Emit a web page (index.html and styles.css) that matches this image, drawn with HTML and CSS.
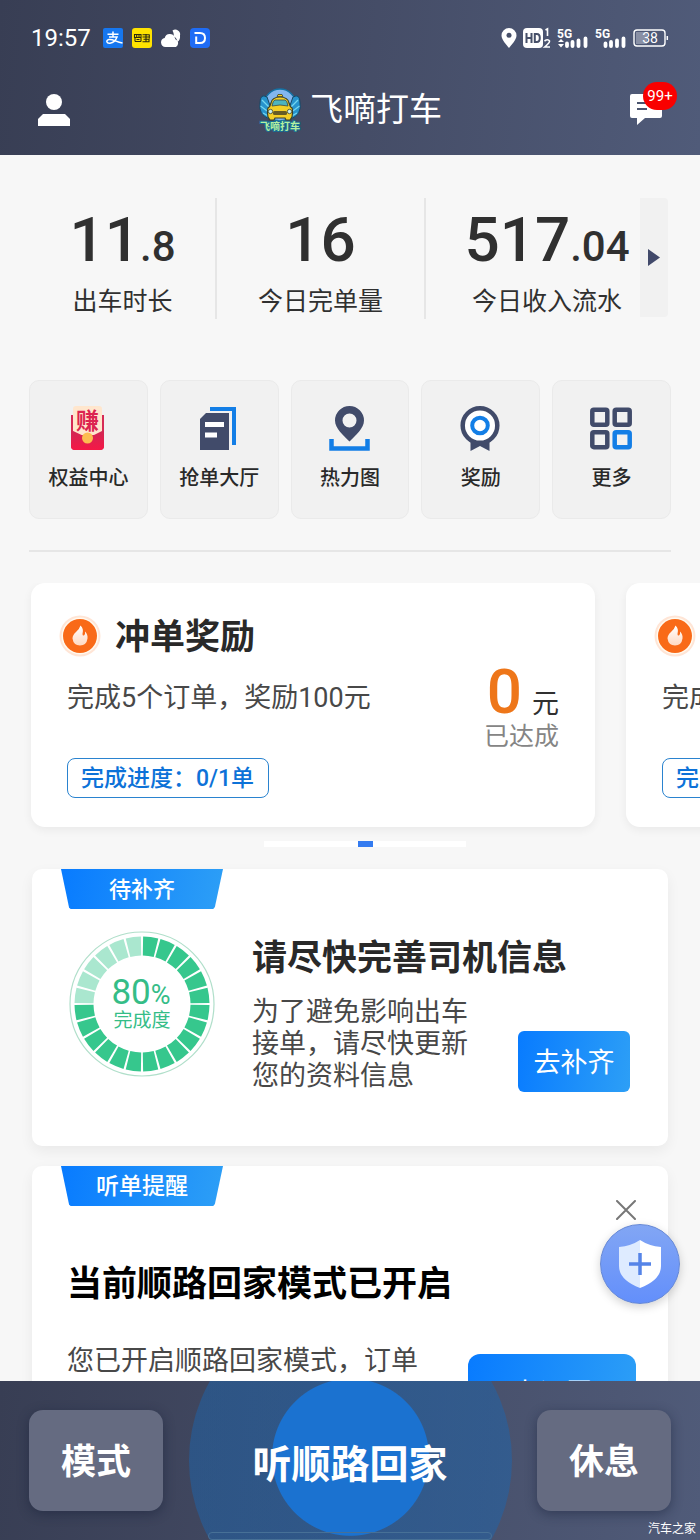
FILE: index.html
```html
<!DOCTYPE html>
<html lang="zh-CN">
<head>
<meta charset="utf-8">
<meta name="viewport" content="width=device-width, initial-scale=1">
<title>飞嘀打车</title>
<link rel="stylesheet" href="styles.css">
</head>
<body>
<div class="app">
  <header class="header">
    <div class="status">
      <div class="status-side">
        <time class="clock">19:57</time>
        <svg class="app-badge" viewBox="0 0 20 20"><rect width="20" height="20" rx="2" fill="#1677f0"/><path d="M4.500 6.300h11M10 3.500v5M6 9h8q-2 5.500-7 6.200c-3.500.4-4.500-3-1-3.700 4-.6 7 2.500 13.500 3.500" fill="none" stroke="#fff" stroke-width="1.500"/></svg>
        <svg class="app-badge" viewBox="0 0 20 20"><rect width="20" height="20" rx="3" fill="#ffe300"/><path d="M2.500 6.500h6.500v3h-6.500zM4.700 6.500v3M7 6.500v3M3 13.500h6M3 9.500v4M9 9.500v4M4.500 11.500h3M10.500 6.700h7M10.500 9h7M11.500 11.200h5.500v2.500h-6.500M14 6v7.500M17.300 6.500v4" fill="none" stroke="#2b2a10" stroke-width="1.100"/></svg>
        <svg class="app-badge" viewBox="0 0 20 20"><path d="M11.500 2.500a4.800 4.800 0 0 1 7.500 5q.500 4-2.500 6.500-.5-4-3.500-5.300 0-3.700-1.500-6.200z" fill="#fff"/><path d="M4.500 19a4.600 4.600 0 0 1-.8-9.100 5.300 5.300 0 0 1 10-.6q-.2 2 2.800 3.500a5 5 0 0 1-1.500 6.200z" fill="#fff"/></svg>
        <svg class="app-badge" viewBox="0 0 20 20"><rect width="20" height="20" rx="4" fill="#1f6cf5"/><path d="M4.500 5H10q5 0 5 5t-5 5H6.200V8.500" fill="none" stroke="#fff" stroke-width="2"/></svg>
      </div>
      <div class="status-side status-right">
        <svg class="pin" viewBox="0 0 16 20"><path d="M8 0a7.500 7.500 0 0 1 7.500 7.500C15.500 12 10.500 16.500 8 20 5.500 16.500.5 12 .5 7.500A7.500 7.500 0 0 1 8 0z" fill="#fff"/><circle cx="8" cy="7.300" r="2.500" fill="#475069"/></svg>
        <svg class="hd" viewBox="0 0 28 22"><rect y="1" width="20" height="20" rx="4" fill="#fff"/><path d="M3.500 6v10M8.500 6v10M3.500 11h5M11.800 7h2q3 0 3 4t-3 4h-2z" fill="none" stroke="#475069" stroke-width="2"/><path d="M22.500 3l2-1.200V9M21.500 14q3.500-2.500 5 0 .5 1.500-4.800 6h5.300" fill="none" stroke="#fff" stroke-width="1.600"/></svg>
        <svg class="signal" viewBox="0 0 32 22"><text x="0" y="11" class="net">5G</text><path d="M1 15l3-3 3 3zM1 17l3 3.500L7 17z" fill="#fff"/><path d="M10 16.500V19M15.500 15v4M21.500 13.500V19M28.500 11.500V19" stroke="#fff" stroke-width="3.800" stroke-linecap="round"/></svg>
        <svg class="signal" viewBox="0 0 32 22"><text x="0" y="11" class="net">5G</text><path d="M10.500 16.500V19M16 15v4M22 13.500V19M28.500 11.500V19" stroke="#fff" stroke-width="3.800" stroke-linecap="round"/></svg>
        <svg class="battery" viewBox="0 0 36 18"><rect x="3" y="3" width="11" height="12" fill="#8990a5"/><rect x="1" y="1" width="31" height="16" rx="3" fill="none" stroke="#fff" stroke-width="1.400"/><path d="M34.300 7v4" stroke="#fff" stroke-width="1.500"/><text x="17" y="14" text-anchor="middle" class="charge">38</text></svg>
      </div>
    </div>
    <div class="titlebar">
      <button class="icon-button" aria-label="个人中心">
        <svg class="user" viewBox="0 0 32 32"><circle cx="16" cy="8" r="8" fill="#fff"/><path d="M0 32v-7l5-5h22l5 5v7z" fill="#fff"/></svg>
      </button>
      <div class="brand">
        <svg class="logo" viewBox="0 0 44 44">
          <circle cx="22" cy="17" r="16" fill="#83b7ee" stroke="#1472a4" stroke-width="1.500"/>
          <path d="M9 9Q2 5 2 15q-2 11 9 16l3-8zM35 9q7-4 7 6 2 11-9 16l-3-8z" fill="#2793cc" stroke="#174663" stroke-width="1"/>
          <path d="M4 12l7 7M2.500 18l8 6M5 25l7 4M40 12l-7 7M41.500 18l-8 6M39 25l-7 4" stroke="#73d6f1" stroke-width="1.300"/>
          <path d="M10 20q2-1 3-5 1-6 9-6t9 6q1 4 3 5 1 3 0 9l-2 3h-4l-1-2H17l-1 2h-4l-2-3q-1-6 0-9z" fill="#f4cf25" stroke="#3d4127" stroke-width="1.200"/>
          <path d="M14 18q1-6 3-6h10q2 0 3 6-8-2-16 0z" fill="#4fb4bd" stroke="#34484a" stroke-width=".8"/>
          <path d="M19 8.500l1-2h4l1 2z" fill="#f4cf25" stroke="#3d4127" stroke-width=".8"/>
          <rect x="15" y="23" width="14" height="4" rx="1.500" fill="#665c25"/>
          <circle cx="12.500" cy="23.500" r="2.200" fill="#c9eeee" stroke="#3d4127" stroke-width=".8"/><circle cx="31.500" cy="23.500" r="2.200" fill="#c9eeee" stroke="#3d4127" stroke-width=".8"/>
          <text x="22" y="42" text-anchor="middle" class="logo-text">飞嘀打车</text>
        </svg>
        <h1 class="brand-name">飞嘀打车</h1>
      </div>
      <button class="icon-button message" aria-label="消息">
        <svg class="chat" viewBox="0 0 32 32"><path d="M2 0h28q2 0 2 2v20q0 2-2 2H15l-8 7v-7H2q-2 0-2-2V2q0-2 2-2z" fill="#fff"/><path d="M7 9h18M7 15h10" stroke="#4a546f" stroke-width="2"/></svg>
        <span class="count">99+</span>
      </button>
    </div>
  </header>

  <main class="main">
    <section class="stats">
      <div class="stat stat-hours"><strong class="value">11<small class="fraction">.8</small></strong><span class="stat-label">出车时长</span></div>
      <div class="stat stat-orders"><strong class="value">16</strong><span class="stat-label">今日完单量</span></div>
      <div class="stat stat-income"><strong class="value">517<small class="fraction">.04</small></strong><span class="stat-label">今日收入流水</span></div>
      <button class="stats-next" aria-label="更多数据"><svg class="arrow" viewBox="0 0 12 17"><path d="M0 0l12 8.500L0 17z" fill="#41496a"/></svg></button>
    </section>

    <nav class="tiles">
      <a class="tile" href="#"><svg class="tile-icon" viewBox="0 0 46 46">
        <defs><linearGradient id="envelope" x2="0" y2="1"><stop stop-color="#cf2855"/><stop offset="1" stop-color="#f51846"/></linearGradient></defs>
        <path d="M6 10h33v31q0 4-4 4H10q-4 0-4-4z" fill="#d62a55"/><path d="M8 4q0-3 3-3h23q3 0 3 3v26H8z" fill="#ffe6cd"/>
        <path d="M6 25l17 8 16-8v16q0 4-4 4H10q-4 0-4-4z" fill="url(#envelope)"/><circle cx="22.500" cy="33" r="5.500" fill="#fdbd50"/>
        <text x="22.500" y="24" text-anchor="middle" class="earn">赚</text></svg><span>权益中心</span></a>
      <a class="tile" href="#"><svg class="tile-icon" viewBox="0 0 46 46"><path d="M14 4h24v36" fill="none" stroke="#137ee6" stroke-width="4"/><path d="M10 8h23v37H4V14z" fill="#414b6a"/><path d="M9 19.500h19M9 30h12" stroke="#fff" stroke-width="5"/></svg><span>抢单大厅</span></a>
      <a class="tile" href="#"><svg class="tile-icon" viewBox="0 0 46 46"><path d="M22.500 1a14.500 14.500 0 0 1 14.500 14.500c0 8-8.500 15-14.500 21-6-6-14.500-13-14.500-21A14.500 14.500 0 0 1 22.500 1zm0 7.500a7 7 0 1 0 0 14 7 7 0 0 0 0-14z" fill="#414b6a" fill-rule="evenodd"/><path d="M4.500 34v9.500h36V34" fill="none" stroke="#137ee6" stroke-width="4.500"/></svg><span>热力图</span></a>
      <a class="tile" href="#"><svg class="tile-icon" viewBox="0 0 46 46"><path d="M12.500 33v13l9.500-5 9.500 5V33z" fill="#414b6a"/><circle cx="22" cy="20.500" r="17.300" fill="#fff" stroke="#414b6a" stroke-width="4.500"/><circle cx="22" cy="20.500" r="7.800" fill="none" stroke="#137ee6" stroke-width="4"/></svg><span>奖励</span></a>
      <a class="tile" href="#"><svg class="tile-icon" viewBox="0 0 46 46"><g fill="none" stroke="#414b6a" stroke-width="4.500"><rect x="3.300" y="4.800" width="15" height="15" rx="1.500"/><rect x="25.700" y="4.800" width="15" height="15" rx="1.500"/><rect x="3.300" y="27.200" width="15" height="15" rx="1.500"/><rect x="25.700" y="27.200" width="15" height="15" rx="1.500" stroke="#137ee6"/></g></svg><span>更多</span></a>
    </nav>
    <hr class="rule">

    <section class="carousel" aria-label="奖励活动">
      <article class="reward">
        <div class="reward-head">
          <svg class="fire" viewBox="0 0 42 42"><defs><linearGradient id="fire" x2="0" y2="1"><stop stop-color="#fff"/><stop offset="1" stop-color="#ffd9c2"/></linearGradient></defs><circle cx="21" cy="21" r="20.500" fill="#ffe5d6"/><circle cx="21" cy="21" r="18.500" fill="#fffaf0"/><circle cx="21" cy="21" r="17" fill="#f96a18"/><path d="M21.500 10.500q3.500 3 2 8.500 0 2 1.500 1.500 1.500-1 1-4 3 3 2.500 7-1 7-7.500 7t-7.500-7q0-3.500 3.500-6.500Q20.500 14 21.500 10.500z" fill="url(#fire)"/></svg>
          <h2 class="title">冲单奖励</h2>
        </div>
        <div class="reward-body">
          <div class="reward-info"><p class="copy">完成5个订单，奖励100元</p><span class="progress">完成进度：0/1单</span></div>
          <div class="amount"><p class="money"><strong class="amount-value">0</strong><span class="unit">元</span></p><span class="reached">已达成</span></div>
        </div>
      </article>
      <article class="reward">
        <div class="reward-head">
          <svg class="fire" viewBox="0 0 42 42"><circle cx="21" cy="21" r="20.500" fill="#ffe5d6"/><circle cx="21" cy="21" r="18.500" fill="#fffaf0"/><circle cx="21" cy="21" r="17" fill="#f96a18"/><path d="M21.500 10.500q3.500 3 2 8.500 0 2 1.500 1.500 1.500-1 1-4 3 3 2.500 7-1 7-7.500 7t-7.500-7q0-3.500 3.500-6.500Q20.500 14 21.500 10.500z" fill="url(#fire)"/></svg>
        </div>
        <div class="reward-body">
          <div class="reward-info"><p class="copy">完成</p><span class="progress">完成</span></div>
        </div>
      </article>
    </section>
    <div class="pager"><span class="pager-current"></span></div>

    <section class="card">
      <div class="ribbon">待补齐</div>
      <div class="profile">
        <svg class="ring" viewBox="0 0 146 146">
          <circle cx="73" cy="73" r="72" fill="none" stroke="#b0dfca" stroke-width="1.200"/>
          <path d="M73 15A58 58 0 1 1 15 73" pathLength="180" fill="none" stroke="#36c78d" stroke-width="19" stroke-dasharray="8.700 1.300" stroke-dashoffset="-.65"/>
          <path d="M15 73A58 58 0 0 1 73 15" pathLength="60" fill="none" stroke="#aae7cf" stroke-width="19" stroke-dasharray="8.700 1.300" stroke-dashoffset="-.65"/>
          <text x="72" y="73" text-anchor="middle" class="percent">80<tspan class="percent-sign">%</tspan></text>
          <text x="73" y="96" text-anchor="middle" class="percent-label">完成度</text>
        </svg>
        <div class="profile-info">
          <h2 class="title">请尽快完善司机信息</h2>
          <div class="profile-row"><p class="copy profile-copy">为了避免影响出车接单，请尽快更新您的资料信息</p><button class="action">去补齐</button></div>
        </div>
      </div>
    </section>

    <section class="card">
      <div class="ribbon ribbon-notice">听单提醒</div>
      <button class="close" aria-label="关闭"><svg viewBox="0 0 20 20"><path d="M1 1l18 18M19 1L1 19" stroke="#777" stroke-width="2" stroke-linecap="round"/></svg></button>
      <div class="notice">
        <h2 class="title notice-title">当前顺路回家模式已开启</h2>
        <div class="notice-row"><p class="copy">您已开启顺路回家模式，订单</p><button class="action action-large">去设置</button></div>
      </div>
    </section>
  </main>

  <button class="safety" aria-label="安全中心"><svg class="shield" viewBox="0 0 42 48"><path d="M21 0q9 6 21 7v19q0 14-21 22z" fill="#fff"/><path d="M21 0Q12 6 0 7v19q0 14 21 22z" fill="#deebff"/><path d="M21 13v22M10 24h22" stroke="#5584e8" stroke-width="3.500"/></svg></button>

  <footer class="dock">
    <button class="dock-button">模式</button>
    <button class="listen">听顺路回家</button>
    <button class="dock-button">休息</button>
    <span class="home-bar"></span>
    <span class="source">汽车之家</span>
  </footer>
</div>
</body>
</html>
```

FILE: styles.css
```css
* { box-sizing: border-box; }

body,
h1,
h2,
p { margin: 0; }

body {
  background: #f7f7f7;
  color: #303030;
  font-family: Roboto, "Noto Sans CJK SC", sans-serif;
}

button {
  border: 0;
  padding: 0;
  color: inherit;
  font: inherit;
  background: none;
  cursor: pointer;
}

svg { display: block; flex: none; }

.app {
  position: relative;
  display: flex;
  flex-direction: column;
  height: 100vh;
  overflow: hidden;
}

/* Header */
.header {
  flex: none;
  padding: 20px 31px 0;
  color: #fff;
  background: linear-gradient(95deg, #383e54, #424962 40%, #505b79);
}

.status,
.status-side,
.titlebar,
.brand { display: flex; align-items: center; }

.status { justify-content: space-between; height: 36px; }
.status-side { gap: 9px; }
.status-right { gap: 6px; }
.clock { margin-right: 3px; font-size: 24px; line-height: 32px; }
.app-badge { width: 20px; height: 20px; }
.pin { width: 16px; height: 20px; }
.hd { width: 28px; height: 22px; }
.signal { width: 32px; height: 22px; }
.battery { width: 36px; height: 18px; }
.net { fill: #fff; font-size: 12px; font-weight: 700; }
.charge { fill: #fff; font-size: 14px; }

.titlebar { justify-content: space-between; height: 91px; margin-top: 8px; padding: 0 7px; }
.icon-button { position: relative; }
.user,
.chat { width: 32px; height: 32px; }
.brand { gap: 8px; }
.logo { width: 44px; height: 44px; }
.logo-text { fill: #b4f0a0; stroke: #176d96; stroke-width: 2px; paint-order: stroke; font-size: 10px; font-weight: 700; }
.brand-name { font-size: 33px; font-weight: 400; line-height: 44px; }

.count {
  position: absolute;
  top: -12px;
  left: 13px;
  width: 34px;
  border-radius: 14px;
  background: #f90000;
  font-size: 15px;
  line-height: 28px;
}

/* Main content */
.main {
  flex: 1;
  min-height: 0;
  overflow-x: hidden;
  overflow-y: auto;
  scrollbar-width: none;
}

.stats {
  position: relative;
  display: grid;
  grid-template-columns: 185fr 209fr 244fr;
  margin: 43px 32px 61px 30px;
}

.stat {
  display: flex;
  flex-direction: column;
  align-items: center;
  gap: 14px;
  padding: 10px 0 1px;
}

.stat + .stat { border-left: 2px solid #e6e6e6; }
.value { font-size: 62px; font-weight: 500; line-height: 64px; }
.fraction { font-size: 42px; line-height: 32px; }
.stat-label { font-size: 25px; line-height: 32px; }

.stats-next {
  position: absolute;
  top: 0;
  right: 0;
  bottom: 2px;
  display: grid;
  place-items: center;
  width: 28px;
  border-radius: 0 4px 4px 0;
  background: #f1f1f1;
}

.arrow { width: 12px; height: 17px; }

.tiles {
  display: grid;
  grid-template-columns: repeat(5, 1fr);
  gap: 12px;
  padding: 0 29px;
}

.tile {
  display: flex;
  flex-direction: column;
  align-items: center;
  gap: 14px;
  padding: 24px 0 26px;
  border: 1px solid #eaeaea;
  border-radius: 10px;
  background: #f1f1f1;
  color: #292929;
  font-size: 20px;
  font-weight: 500;
  line-height: 27px;
  text-decoration: none;
}

.tile-icon { width: 46px; height: 46px; }
.earn { fill: #dc2450; font-size: 23px; font-weight: 700; }
.rule { height: 2px; margin: 31px 29px; border: 0; background: #e6e6e6; }

/* Reward carousel */
.carousel {
  display: flex;
  gap: 31px;
  padding: 0 31px 14px;
  overflow-x: auto;
  scrollbar-width: none;
}

.reward {
  flex: 0 0 calc(100% - 74px);
  padding: 32px 36px 29px 28px;
  border-radius: 14px;
  background: #fff;
  box-shadow: 0 3px 10px rgb(0 0 0 / 6%);
}

.reward-head { display: flex; align-items: center; gap: 14px; height: 41px; }
.fire { width: 42px; height: 42px; }
.title { padding-top: 3px; color: #292929; font-size: 35px; font-weight: 700; line-height: 41px; }
.copy { color: #484848; font-size: 27px; line-height: 32px; }
.reward-body { display: flex; justify-content: space-between; padding-left: 8px; }
.reward-info { display: flex; flex-direction: column; align-items: flex-start; gap: 44px; padding-top: 26px; white-space: nowrap; }

.progress {
  padding: 2px 14px 0 13px;
  border: 1px solid #2a83cf;
  border-radius: 8px;
  color: #0d72d8;
  font-size: 23px;
  font-weight: 500;
  line-height: 36px;
}

.amount { display: flex; flex-direction: column; align-items: flex-end; padding-top: 4px; }
.money { display: flex; align-items: baseline; gap: 10px; line-height: 64px; }
.amount-value { color: #ee7619; font-size: 62px; font-weight: 500; }
.unit { font-size: 27px; line-height: 32px; }
.reached { color: #858585; font-size: 25px; line-height: 26px; }

.pager { width: 202px; height: 6px; margin: 0 auto; padding-left: 94px; background: #fff; transform: translateX(15px); }
.pager-current { display: block; width: 15px; height: 6px; background: #347bf0; }

/* Task cards */
.card {
  position: relative;
  margin: 22px 32px 0;
  border-radius: 10px;
  background: #fff;
  box-shadow: 0 5px 14px rgb(0 0 0 / 6%);
}

.card + .card { margin-top: 20px; }

.ribbon {
  width: 162px;
  margin-left: 29px;
  padding-top: 2px;
  background: linear-gradient(100deg, #087bff, #2d9ff6);
  clip-path: polygon(0 0, 100% 0, 95% 95%, 94% 100%, 6% 100%, 5% 97%);
  color: #fff;
  font-size: 22px;
  font-weight: 500;
  line-height: 38px;
  text-align: center;
}

.ribbon-notice { font-size: 23px; }
.profile { display: flex; gap: 37px; padding: 22px 38px 54px 37px; }
.ring { width: 146px; height: 146px; }
.percent { fill: #35bd87; font-size: 35px; }
.percent-sign { font-size: 27px; }
.percent-label { fill: #35bd87; font-size: 19px; }
.profile-info { flex: 1; padding-top: 4px; white-space: nowrap; }
.profile-row { display: flex; align-items: flex-end; justify-content: space-between; margin-top: 17px; }
.profile-copy { flex: 0 1 220px; white-space: normal; }

.action {
  flex: none;
  width: 112px;
  padding-top: 3px;
  border-radius: 6px;
  background: linear-gradient(100deg, #087bff, #2d9ff6);
  color: #fff;
  font-size: 27px;
  line-height: 58px;
}

.notice { padding: 55px 32px 40px 35px; }
.notice-title { color: #000; }
.notice-row { display: flex; justify-content: space-between; margin-top: 40px; }
.action-large { width: 168px; margin-top: 9px; border-radius: 12px; line-height: 74px; }
.close { position: absolute; top: 34px; right: 32px; width: 20px; height: 20px; }

.safety {
  position: absolute;
  right: 20px;
  bottom: 236px;
  display: grid;
  place-items: center;
  width: 80px;
  height: 80px;
  border: 1px solid #6688d4;
  border-radius: 50%;
  background: linear-gradient(#82a6f4, #638ffb);
  box-shadow: 0 3px 10px rgb(0 0 0 / 18%);
}

.shield { width: 42px; height: 48px; }

/* Bottom dock */
.dock {
  position: relative;
  display: flex;
  flex: none;
  align-items: center;
  justify-content: space-between;
  height: 159px;
  padding: 0 29px;
  overflow: hidden;
  background: linear-gradient(95deg, #383e54, #424962 40%, #505b79);
  color: #fff;
  font-size: 35px;
  font-weight: 700;
}

.dock-button {
  width: 134px;
  padding-top: 4px;
  border-radius: 14px;
  background: #656b81;
  box-shadow: 0 3px 12px rgb(20 28 54 / 45%);
  line-height: 97px;
}

.listen {
  flex: none;
  width: 323px;
  height: 323px;
  border-radius: 50%;
  background: radial-gradient(circle at 50% 49%, #1b72d0 78px, rgb(27 101 175 / 48%) 79px);
  font-size: 39px;
}

.home-bar {
  position: absolute;
  bottom: 0;
  left: 50%;
  width: 284px;
  height: 8px;
  margin-left: -142px;
  border: 1px solid #477096;
  border-radius: 4px;
}

.source { position: absolute; right: 4px; bottom: 3px; font-size: 12px; font-weight: 400; line-height: 16px; }
```
